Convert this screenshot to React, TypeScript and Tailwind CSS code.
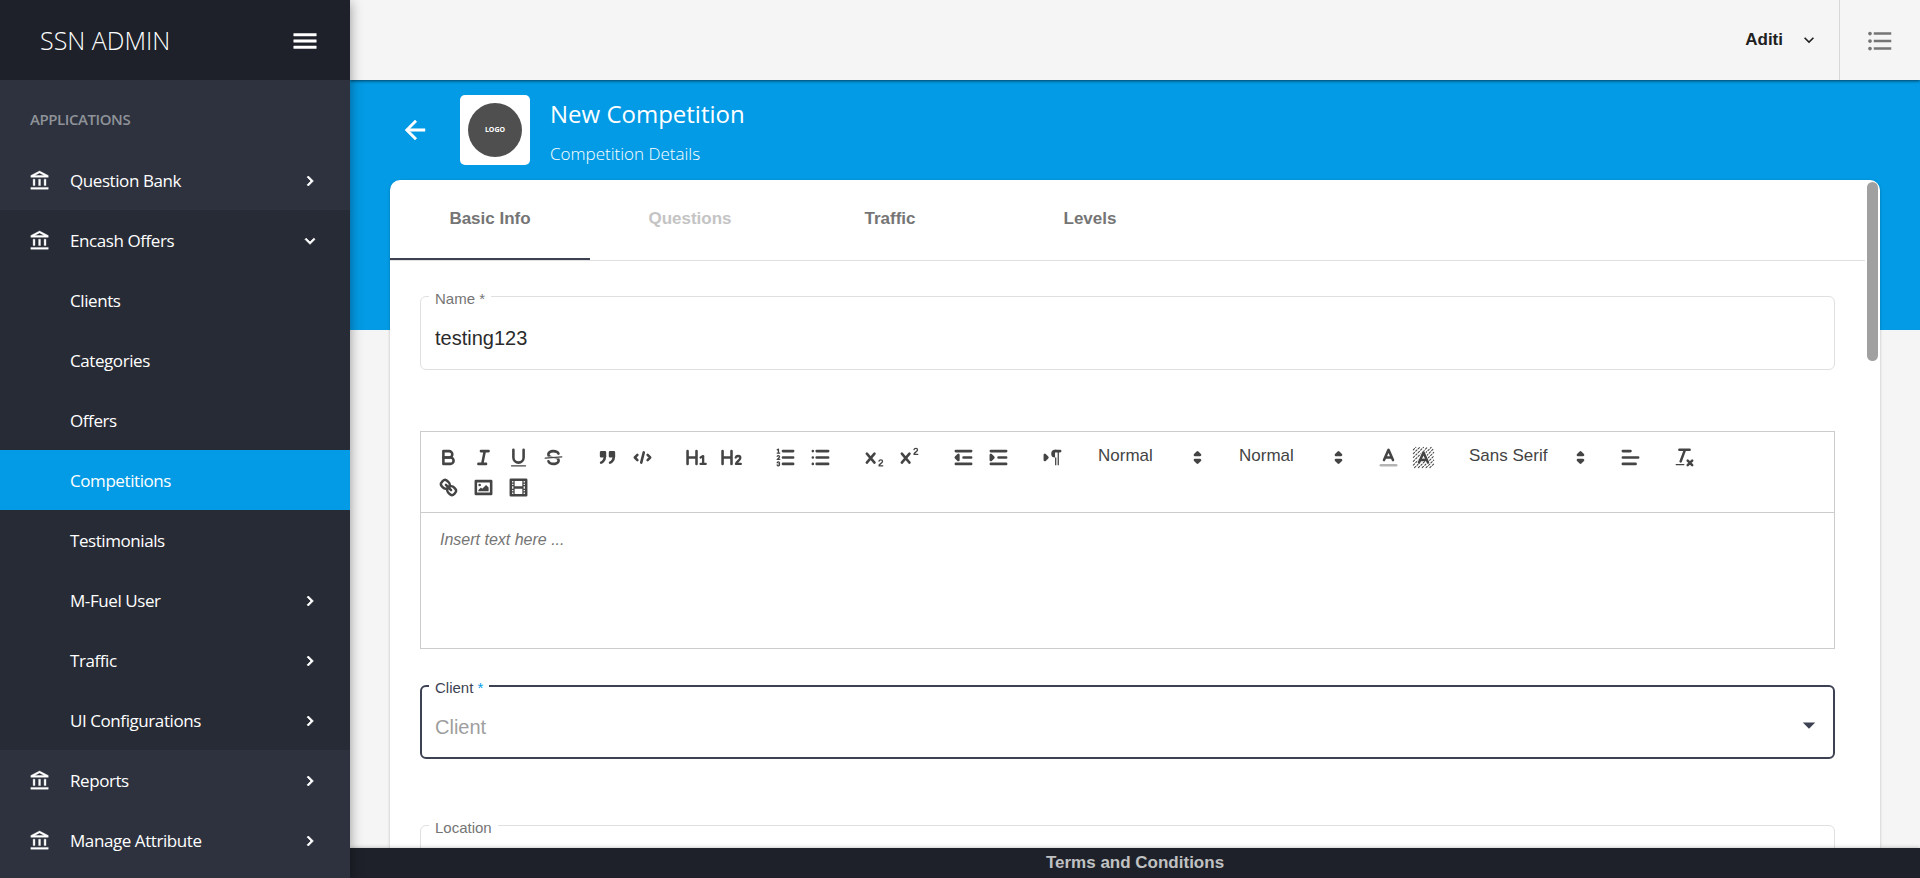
import type { ReactNode } from "react";
import { MdArrowDropDown, MdExpandMore, MdFormatListBulleted } from "react-icons/md";

const humanist = "font-['Open_Sans','Noto_Sans',sans-serif]";

type NavEntry = { label: string; arrow?: boolean; active?: boolean };

const encashChildren: NavEntry[] = [
  { label: "Clients" },
  { label: "Categories" },
  { label: "Offers" },
  { label: "Competitions", active: true },
  { label: "Testimonials" },
  { label: "M-Fuel User", arrow: true },
  { label: "Traffic", arrow: true },
  { label: "UI Configurations", arrow: true },
];

function Glyph({ d, className, weight = 0.4 }: { d: string; className: string; weight?: number }) {
  return (
    <svg viewBox="0 0 24 24" className={className} fill="currentColor" stroke="currentColor" strokeWidth={weight} aria-hidden="true">
      <path d={d} />
    </svg>
  );
}

const bankPath =
  "M6.5 10h-2v7h2v-7zm6 0h-2v7h2v-7zm8.500 9H2v2h19v-2zm-2.500-9h-2v7h2v-7zm-7-6.740L16.710 6H6.290l5.210-2.740m0-2.260L2 6v2h19V6l-9.500-5z";
const chevronRightPath = "M10 6L8.590 7.410 13.170 12l-4.580 4.590L10 18l6-6z";
const chevronDownPath = "M16.590 8.590L12 13.170 7.410 8.590 6 10l6 6 6-6z";
const menuPath = "M3 18h18v-2H3v2zm0-5h18v-2H3v2zm0-7v2h18V6H3z";
const backPath = "M20 11H7.830l5.590-5.590L12 4l-8 8 8 8 1.410-1.410L7.830 13H20v-2z";

function ChevronRight() {
  return <Glyph d={chevronRightPath} weight={0.9} className="size-5" />;
}

function NavGroup({ label, open, children }: { label: string; open?: boolean; children?: ReactNode }) {
  return (
    <li className={open ? "bg-[#272b35]" : ""}>
      <button type="button" aria-expanded={!!open} className="flex h-[60px] w-full items-center pt-px pr-[30px] pl-[29px] text-left">
        <Glyph d={bankPath} className="mr-[19px] size-[22px]" />
        <span className="flex-1">{label}</span>
        {open ? <Glyph d={chevronDownPath} weight={0.9} className="size-5" /> : <ChevronRight />}
      </button>
      {children}
    </li>
  );
}

function Sidebar() {
  return (
    <aside className={`z-20 flex w-[350px] shrink-0 flex-col bg-[#2d323e] text-white shadow-[0_2px_12px_rgba(0,0,0,0.4)] ${humanist}`}>
      <div className="flex h-20 shrink-0 items-center justify-between bg-[#1e2129] pt-0.5 pr-[30px] pl-10">
        <span className="text-[25px] font-light">SSN ADMIN</span>
        <button type="button" aria-label="Toggle navigation">
          <Glyph d={menuPath} className="size-[30px]" />
        </button>
      </div>
      <nav className="min-h-0 flex-1 overflow-hidden text-[17px] tracking-tight">
        <h2 className="flex h-[70px] items-center px-[30px] pt-2 text-[15px] font-semibold text-[#8f9299]">APPLICATIONS</h2>
        <ul>
          <NavGroup label="Question Bank" />
          <NavGroup label="Encash Offers" open>
            <ul>
              {encashChildren.map((item) => (
                <li key={item.label}>
                  <a href="#" className={`flex h-[60px] items-center justify-between pt-px pr-[30px] pl-[70px] ${item.active ? "bg-[#039be5]" : ""}`}>
                    {item.label}
                    {item.arrow && <ChevronRight />}
                  </a>
                </li>
              ))}
            </ul>
          </NavGroup>
          <NavGroup label="Reports" />
          <NavGroup label="Manage Attribute" />
        </ul>
      </nav>
    </aside>
  );
}

function Icon({ children }: { children: ReactNode }) {
  return (
    <svg viewBox="0 0 18 18" className="size-[23px]" fill="none" stroke="#444" strokeWidth="2" strokeLinecap="round" strokeLinejoin="round">
      {children}
    </svg>
  );
}

const icons: Record<string, ReactNode> = {
  Bold: (
    <>
      <path d="M5,4H9.5A2.5,2.5,0,0,1,9.5,9H5Z" />
      <path d="M5,9h5.5A2.5,2.5,0,0,1,10.5,14H5Z" />
    </>
  ),
  Italic: <path d="M7,4H13M5,14H11M8,14L10,4" />,
  Underline: (
    <>
      <path d="M5,3V9a4,4,0,0,0,8,0V3" />
      <rect x="3" y="15" width="12" height="1" rx="0.5" fill="#444" stroke="none" />
    </>
  ),
  Strike: (
    <>
      <path strokeWidth="1" d="M15.5,8.5L2.5,9.5" />
      <g fill="#444" stroke="none">
        <path d="M9.007,8C6.542,7.791,6,7.519,6,6.5,6,5.792,7.283,5,9,5c1.571,0,2.765.679,2.969,1.309a1,1,0,0,0,1.9-.617C13.356,4.106,11.354,3,9,3,6.2,3,4,4.538,4,6.5a3.2,3.2,0,0,0,.5,1.843Z" />
        <path d="M8.984,10C11.457,10.208,12,10.479,12,11.5c0,0.708-1.283,1.5-3,1.5-1.571,0-2.765-.679-2.969-1.309a1,1,0,1,0-1.9.617C4.644,13.894,6.646,15,9,15c2.8,0,5-1.538,5-3.5a3.2,3.2,0,0,0-.5-1.843Z" />
      </g>
    </>
  ),
  Blockquote: (
    <>
      <rect x="4" y="5" width="3" height="3" fill="#444" />
      <rect x="11" y="5" width="3" height="3" fill="#444" />
      <path fill="#444" d="M7,8c0,4.031-3,5-3,5" />
      <path fill="#444" d="M14,8c0,4.031-3,5-3,5" />
    </>
  ),
  "Code block": <path d="M5,7L3,9L5,11M13,7L15,9L13,11M10,5L8,13" />,
  "Heading 1": (
    <>
      <path d="M2,4V14M9,4V14M2,9H9" />
      <path strokeWidth="1.8" d="M12.2,9L14.2,7.9V14M12.2,14H16.2" />
    </>
  ),
  "Heading 2": (
    <>
      <path d="M2,4V14M9,4V14M2,9H9" />
      <path strokeWidth="1.8" d="M12.3,9C12.8,7.4,15.9,7.4,15.9,9.3C15.9,11,13.2,12,12.5,14H16.3" />
    </>
  ),
  "Ordered list": (
    <>
      <path d="M7,4H15M7,9H15M7,14H15" />
      <path strokeWidth="1" d="M2.5,3L3.5,2.5V5.5M2.5,5.5H4.5" />
      <path strokeWidth="1" d="M4.5,10.5h-2c0-.234,1.85-1.076,1.85-2.234A0.959,0.959,0,0,0,2.5,8.156" />
      <path strokeWidth="1" d="M2.5,14.846a0.959,0.959,0,0,0,1.85-.109A0.7,0.7,0,0,0,3.75,14a0.688,0.688,0,0,0,.6-0.736,0.959,0.959,0,0,0-1.85-.109" />
    </>
  ),
  "Bullet list": <path d="M6,4H15M6,9H15M6,14H15M3,4H3.01M3,9H3.01M3,14H3.01" />,
  Subscript: (
    <>
      <path d="M3,6L9,13M9,6L3,13" />
      <path strokeWidth="1" d="M12.5,11.8C12.8,10.4,15.3,10.4,15.3,12C15.3,13.6,12.5,14,12.5,15.5H15.5" />
    </>
  ),
  Superscript: (
    <>
      <path d="M3,6L9,13M9,6L3,13" />
      <path strokeWidth="1" d="M12.5,2.8C12.8,1.4,15.3,1.4,15.3,3C15.3,4.6,12.5,5,12.5,6.5H15.5" />
    </>
  ),
  Outdent: (
    <>
      <path d="M3,14H15M3,4H15M9,9H15" />
      <path fill="#444" d="M5,7V11L3,9Z" />
    </>
  ),
  Indent: (
    <>
      <path d="M3,14H15M3,4H15M9,9H15" />
      <path fill="#444" d="M3,7V11L5,9Z" />
    </>
  ),
  "Text direction": (
    <>
      <path fill="#444" d="M3,11L5,9L3,7Z" />
      <path fill="#444" d="M15,4H11" />
      <path fill="#444" stroke="none" d="M11,3a3,3,0,0,0,0,6h1V3ZM11,4h1v11h-1ZM13,4h1v11h-1Z" />
    </>
  ),
  "Text color": (
    <>
      <path opacity="0.4" d="M3,15H15" />
      <path d="M5.5,11L9,3L12.5,11M6.4,9H11.6" />
    </>
  ),
  "Background color": (
    <>
      <path strokeWidth="0.8" strokeDasharray="1.4 1.3" d="M1,3L3,1M1,6L6,1M1,9L9,1M1,12L12,1M1,15L15,1M2,17L17,2M5,17L17,5M8,17L17,8M11,17L17,11M14,17L17,14" />
      <path stroke="#fff" strokeWidth="3" d="M5.5,13L9,5L12.5,13" />
      <path d="M5.5,13L9,5L12.5,13M6.4,11H11.6" />
    </>
  ),
  Align: <path d="M3,9H15M3,14H13M3,4H9" />,
  "Clear formatting": (
    <>
      <path d="M5,3H13M6,12L9.35,3M11.5,11.5L15,15M15,11.5L11.5,15" />
      <rect x="2" y="14" width="7" height="1" rx="0.5" fill="#444" stroke="none" />
    </>
  ),
  Link: (
    <>
      <path d="M7,7L11,11" />
      <path d="M8.9,4.577a3.476,3.476,0,0,1,.36,4.679A3.476,3.476,0,0,1,4.577,8.9C3.185,7.5,2.035,6.4,4.217,4.217S7.5,3.185,8.9,4.577Z" />
      <path d="M13.423,9.1a3.476,3.476,0,0,0-4.679-.36,3.476,3.476,0,0,0,.36,4.679c1.392,1.392,2.5,2.542,4.679.36S14.815,10.5,13.423,9.1Z" />
    </>
  ),
  Image: (
    <>
      <rect x="3" y="4" width="12" height="10" />
      <g fill="#444" stroke="none">
        <circle cx="6" cy="7" r="1" />
        <path d="M5,12V11L7,9L8,10L11,7L13,9V12Z" />
      </g>
    </>
  ),
  Video: (
    <>
      <rect x="3" y="3" width="12" height="12" />
      <path fill="#444" stroke="none" d="M5,3h1v12h-1ZM12,3h1v12h-1ZM5,8h8v2h-8ZM3,5h3v1h-3ZM3,7h3v1h-3ZM3,10h3v1h-3ZM3,12h3v1h-3ZM12,5h3v1h-3ZM12,7h3v1h-3ZM12,10h3v1h-3ZM12,12h3v1h-3Z" />
    </>
  ),
};

function ToolGroup({ names }: { names: string[] }) {
  return (
    <div className="mr-[19px] flex">
      {names.map((name) => (
        <button key={name} type="button" aria-label={name} title={name} className="flex h-[30px] w-[35px] items-center justify-center">
          <Icon>{icons[name]}</Icon>
        </button>
      ))}
    </div>
  );
}

function Picker({ label, value, options, wide }: { label: string; value: string; options: string[]; wide?: boolean }) {
  return (
    <div className={`relative mr-[19px] flex h-[30px] ${wide ? "w-[134px]" : "w-[122px]"}`}>
      <select aria-label={label} defaultValue={value} className="h-7 w-full appearance-none bg-transparent pl-[9px] text-[17px] text-[#444]">
        {options.map((option) => (
          <option key={option}>{option}</option>
        ))}
      </select>
      <span className="pointer-events-none absolute inset-y-0 right-0.5 flex items-center">
        <Icon>
          <path fill="#444" d="M7,11L9,13L11,11ZM7,7L9,5L11,7Z" />
        </Icon>
      </span>
    </div>
  );
}

function Editor() {
  return (
    <section aria-label="Description" className="mt-[61px] border border-[#ccc]">
      <div className="flex flex-wrap border-b border-[#ccc] p-2.5">
        <ToolGroup names={["Bold", "Italic", "Underline", "Strike"]} />
        <ToolGroup names={["Blockquote", "Code block"]} />
        <ToolGroup names={["Heading 1", "Heading 2"]} />
        <ToolGroup names={["Ordered list", "Bullet list"]} />
        <ToolGroup names={["Subscript", "Superscript"]} />
        <ToolGroup names={["Outdent", "Indent"]} />
        <ToolGroup names={["Text direction"]} />
        <Picker label="Size" value="Normal" options={["Small", "Normal", "Large", "Huge"]} />
        <Picker label="Heading" value="Normal" options={["Heading 1", "Heading 2", "Normal"]} />
        <ToolGroup names={["Text color", "Background color"]} />
        <Picker label="Font" value="Sans Serif" options={["Sans Serif", "Serif", "Monospace"]} wide />
        <ToolGroup names={["Align"]} />
        <ToolGroup names={["Clear formatting"]} />
        <ToolGroup names={["Link", "Image", "Video"]} />
      </div>
      <textarea
        aria-label="Description text"
        placeholder="Insert text here ..."
        className="block h-[135px] w-full resize-none px-[19px] py-[15px] text-base outline-none placeholder:text-[#757575] placeholder:italic"
      />
    </section>
  );
}

type FieldProps = { id: string; label: string; required?: boolean; focused?: boolean; className: string; children: ReactNode };

function Field({ id, label, required, focused, className, children }: FieldProps) {
  return (
    <div className={`relative flex h-[74px] items-center rounded-md ${focused ? "border-2 border-[#3c4252]" : "border border-[#e0e0e0]"} ${className}`}>
      <label htmlFor={id} className={`absolute bg-white px-1.5 text-[15px] leading-5 ${focused ? "-top-[9px] left-[7px] text-[#3c4252]" : "-top-2 left-2 text-[#757575]"}`}>
        {label}
        {required && <span className={focused ? "text-[#039be5]" : ""}> *</span>}
      </label>
      {children}
    </div>
  );
}

function Tab({ label, active, disabled }: { label: string; active?: boolean; disabled?: boolean }) {
  return (
    <button
      type="button"
      role="tab"
      aria-selected={!!active}
      disabled={disabled}
      className={`h-20 w-[200px] border-b-2 text-[17px] font-bold ${active ? "border-[#3c4252]" : "border-transparent"} ${disabled ? "text-[#c4c4c4]" : "text-[#757575]"}`}
    >
      {label}
    </button>
  );
}

export default function App() {
  return (
    <div className="flex h-screen overflow-hidden bg-[#f5f5f5] font-['Liberation_Sans',Arial,sans-serif]">
      <Sidebar />
      <div className="flex min-w-0 flex-1 flex-col">
        <header className="z-10 flex h-20 shrink-0 items-stretch justify-end bg-[#f5f5f5] shadow-[0_1px_3px_rgba(0,0,0,0.6)]">
          <button type="button" className="flex items-center gap-4 pr-5 text-[17px] font-bold text-[#212121]">
            Aditi
            <MdExpandMore className="size-5" />
          </button>
          <button type="button" aria-label="Open quick panel" className="flex w-[81px] items-center justify-center border-l border-[#d8d8d8] pt-0.5 text-[#757575]">
            <MdFormatListBulleted className="size-[30px]" />
          </button>
        </header>

        <main className="flex min-h-0 flex-1 flex-col overflow-hidden bg-[linear-gradient(#039be5,#039be5)] bg-[length:100%_250px] bg-no-repeat px-10">
          <div className={`flex h-[100px] shrink-0 items-center text-white ${humanist}`}>
            <button type="button" aria-label="Back" className="ml-[10px]">
              <Glyph d={backPath} className="size-[30px]" />
            </button>
            <div className="ml-[30px] flex size-[70px] items-center justify-center rounded-[5px] bg-white">
              <div className="flex size-[54px] items-center justify-center rounded-full bg-[#4f4f4f] text-[7px] font-bold">LOGO</div>
            </div>
            <div className="ml-5 pt-2">
              <h1 className="text-2xl leading-9">New Competition</h1>
              <p className="mt-1 text-[17px] leading-9 font-light">Competition Details</p>
            </div>
          </div>

          <div className="relative flex min-h-0 flex-1 flex-col overflow-hidden rounded-t-[10px] bg-white pr-[15px] shadow-[0_1px_3px_rgba(0,0,0,0.25)]">
            <div role="tablist" className="flex shrink-0 border-b border-[#e0e0e0]">
              <Tab label="Basic Info" active />
              <Tab label="Questions" disabled />
              <Tab label="Traffic" />
              <Tab label="Levels" />
            </div>
            <form className="min-h-0 flex-1 overflow-hidden px-[30px]">
              <Field id="name" label="Name" required className="mt-[35px]">
                <input id="name" defaultValue="testing123" className="h-full w-full bg-transparent px-3.5 pt-2.5 text-xl text-[#2b2b2b] outline-none" />
              </Field>
              <Editor />
              <Field id="client" label="Client" required focused className="mt-9">
                <input id="client" placeholder="Client" className="h-full w-full bg-transparent px-[13px] pt-2.5 text-xl outline-none placeholder:text-[#9e9e9e]" />
                <button type="button" aria-label="Show clients" className="pt-1.5 pr-[9px] text-[#3c4252]">
                  <MdArrowDropDown className="size-[30px]" />
                </button>
              </Field>
              <Field id="location" label="Location" className="mt-[66px]">
                <input id="location" className="h-full w-full bg-transparent px-3.5 pt-2.5 text-xl outline-none" />
              </Field>
            </form>
            <div className="absolute top-0.5 right-0.5 h-[179px] w-[11px] rounded-full bg-[#a0a0a0]" />
          </div>
        </main>

        <footer className="z-10 flex h-[30px] shrink-0 items-center justify-center bg-[#1e2129] text-[17px] font-bold text-[#c0c1c3] shadow-[0_0_4px_rgba(0,0,0,0.3)]">
          Terms and Conditions
        </footer>
      </div>
    </div>
  );
}
